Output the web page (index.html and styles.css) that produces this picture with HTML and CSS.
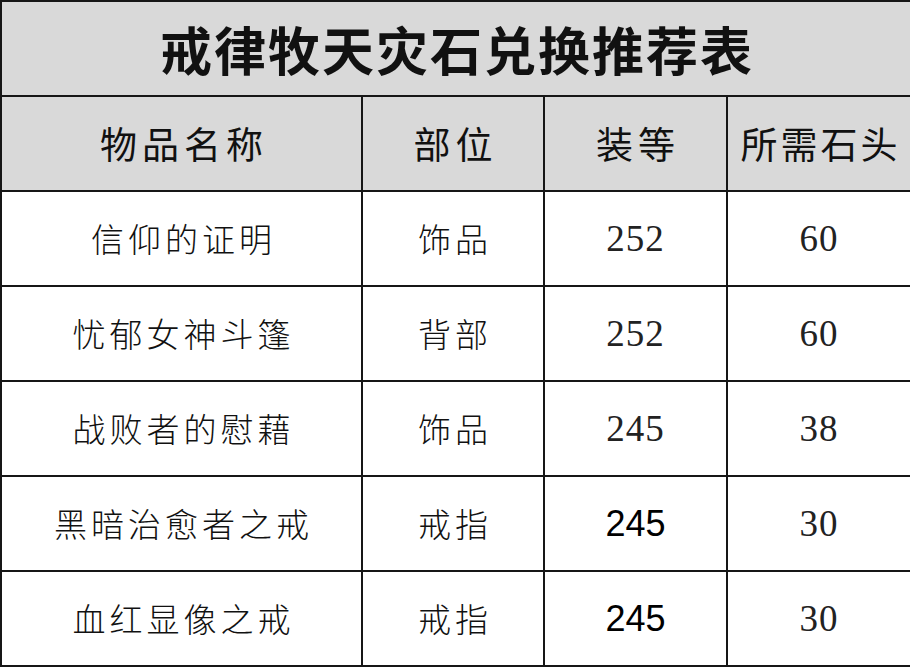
FILE: index.html
```html
<!DOCTYPE html>
<html lang="zh-CN">
<head>
<meta charset="utf-8">
<title>戒律牧天灾石兑换推荐表</title>
<link rel="stylesheet" href="styles.css">
</head>
<body>
<table class="sheet">
  <colgroup>
    <col class="c-name">
    <col class="c-part">
    <col class="c-lvl">
    <col class="c-cost">
  </colgroup>
  <thead>
    <tr class="title-row"><th colspan="4" class="title">戒律牧天灾石兑换推荐表</th></tr>
    <tr class="head-row">
      <th class="head">物品名称</th>
      <th class="head">部位</th>
      <th class="head">装等</th>
      <th class="head tight">所需石头</th>
    </tr>
  </thead>
  <tbody>
    <tr><td class="cn">信仰的证明</td><td class="cn">饰品</td><td class="num">252</td><td class="num">60</td></tr>
    <tr><td class="cn">忧郁女神斗篷</td><td class="cn">背部</td><td class="num">252</td><td class="num">60</td></tr>
    <tr><td class="cn">战败者的慰藉</td><td class="cn">饰品</td><td class="num">245</td><td class="num">38</td></tr>
    <tr><td class="cn">黑暗治愈者之戒</td><td class="cn">戒指</td><td class="sans">245</td><td class="num">30</td></tr>
    <tr><td class="cn">血红显像之戒</td><td class="cn">戒指</td><td class="sans">245</td><td class="num">30</td></tr>
  </tbody>
</table>
</body>
</html>
```
FILE: styles.css
```css
html, body {
  margin: 0;
  padding: 0;
  background: #ffffff;
}
.sheet {
  border-collapse: collapse;
  width: 910px;
  table-layout: fixed;
  color: #111111;
  font-family: "Noto Sans CJK SC", "Noto Sans", sans-serif;
}
.c-name { width: 361px; }
.c-part { width: 182px; }
.c-lvl { width: 183px; }
.c-cost { width: 184px; }
.sheet th, .sheet td {
  border: 2px solid #161616;
  height: 93px;
  padding: 0;
  text-align: center;
  vertical-align: middle;
  white-space: nowrap;
  overflow: hidden;
}
.title-row th, .head-row th {
  background: #d9d9d9;
}
.title {
  font-size: 52px;
  font-weight: 700;
  letter-spacing: 2px;
  text-indent: 2px;
  line-height: 1;
}
.head {
  font-size: 37px;
  font-weight: 400;
  letter-spacing: 5px;
  text-indent: 5px;
  line-height: 1;
}
.head.tight {
  letter-spacing: 3px;
  text-indent: 3px;
}
.cn {
  font-size: 33px;
  font-weight: 300;
  letter-spacing: 4px;
  text-indent: 4px;
  line-height: 1;
}
.num {
  font-family: "Liberation Serif", "DejaVu Serif", serif;
  font-size: 37px;
  font-weight: 400;
  letter-spacing: 1px;
  line-height: 1;
  color: #222222;
}
.sans {
  font-family: "Liberation Sans", Arial, sans-serif;
  font-size: 36px;
  line-height: 1;
  color: #000000;
}
```
